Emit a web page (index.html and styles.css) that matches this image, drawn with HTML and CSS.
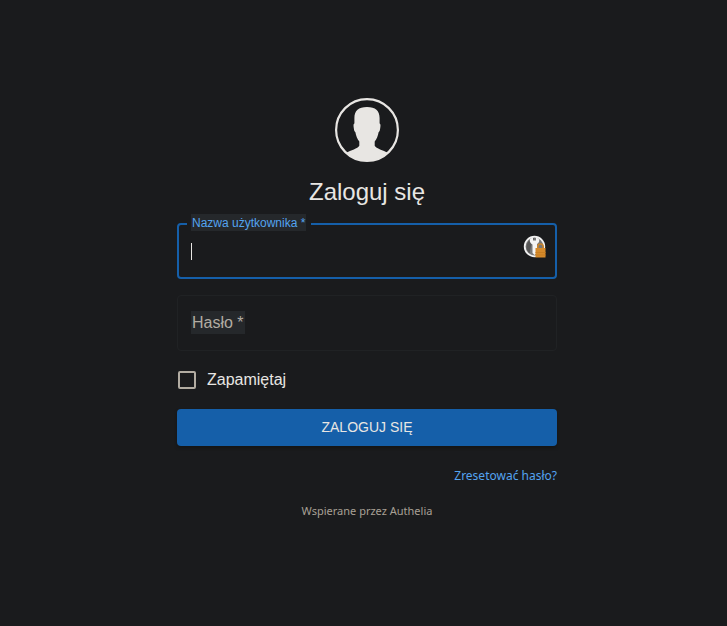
FILE: index.html
```html
<!DOCTYPE html>
<html lang="pl">
<head>
<meta charset="utf-8">
<meta name="viewport" content="width=device-width, initial-scale=1">
<title>Zaloguj się</title>
<link rel="stylesheet" href="styles.css">
</head>
<body>
<main class="login">
  <svg class="avatar" viewBox="0 0 64 64" aria-hidden="true">
    <defs><clipPath id="disc"><circle cx="32" cy="32" r="31"/></clipPath></defs>
    <circle cx="32" cy="32" r="30.9" fill="none" stroke="#e8e6e3" stroke-width="2.2"/>
    <path clip-path="url(#disc)" fill="#e8e6e3" d="M32 9c8.500 0 12.600 3.800 12.600 11v5.400c1 .4 1 2 .7 4.200-.3 2.600-.7 4.200-1.700 4.700-.6 3.600-1.800 6.700-3.900 9.200v4.200c1.500 3 8.500 4.300 13.300 7.300V64H11v-9c4.800-3 11.800-4.300 13.300-7.300v-4.200c-2.100-2.500-3.300-5.600-3.900-9.200-1-.5-1.400-2.100-1.700-4.700-.3-2.200-.3-3.800.7-4.200V20c0-7.200 4.100-11 12.600-11z"/>
  </svg>
  <h1 class="title">Zaloguj się</h1>
  <form class="form">
    <div class="field field-active">
      <label class="label label-raised" for="username">Nazwa użytkownika *</label>
      <input class="input" id="username" type="text" autocomplete="username" required>
      <span class="caret"></span>
      <svg class="key" viewBox="0 0 24 24" aria-hidden="true">
        <circle cx="11.500" cy="11.500" r="9.800" fill="#777" stroke="#f1f1f1" stroke-width="1.800"/>
        <path d="M11 3a9 9 0 0 0-4.500 15.500L8 11z" fill="#555"/>
        <path d="M7.500 3.500l2.500-1v3h3v-3l2.500 1c1.500 2 .5 4.500-1.500 5.500v9L11.500 20l-2-2V9.500C7 8 6 5.500 7.500 3.500z" fill="#f4f4f4"/>
        <path d="M14.800 14v-2.500c0-3.400 5.400-3.400 5.400 0V14" fill="none" stroke="#c9842c" stroke-width="1.600"/>
        <rect x="12.500" y="13" width="10" height="9.500" fill="#d58a2b"/>
        <path d="M12.500 17.500h10M12.500 20h10" stroke="#c97f22" stroke-width="1"/>
      </svg>
    </div>
    <div class="field">
      <label class="label label-resting" for="password">Hasło *</label>
      <input class="input" id="password" type="password" autocomplete="current-password" required>
    </div>
    <label class="remember"><input class="checkbox" type="checkbox">Zapamiętaj</label>
    <button class="submit" type="submit">Zaloguj się</button>
    <a class="reset" href="#reset">Zresetować hasło?</a>
  </form>
  <a class="powered" href="#authelia">Wspierane przez Authelia</a>
</main>
</body>
</html>
```
FILE: styles.css
```css
* {
  box-sizing: border-box;
}

body {
  margin: 0;
  min-height: 100vh;
  background: #1a1b1d;
  color: #e8e6e3;
  font-family: "Liberation Sans", Arial, sans-serif;
  font-size: 16px;
}

.login {
  display: flex;
  flex-direction: column;
  align-items: center;
  padding: 98px 16px 0 23px;
}

.avatar {
  width: 64px;
  height: 64px;
  overflow: visible;
}

.title {
  margin: 14px 0 15px;
  font-size: 24px;
  line-height: 32px;
  font-weight: 400;
}

.form {
  display: flex;
  flex-direction: column;
  gap: 16px;
  width: 100%;
  max-width: 380px;
}

.field {
  position: relative;
  display: flex;
  height: 56px;
  border: 1px solid #202224;
  border-radius: 4px;
}

.field-active {
  border: 2px solid #155fa9;
}

.input {
  flex: 1;
  min-width: 0;
  padding: 0 40px 0 12px;
  border: 0;
  outline: 0;
  background: transparent;
  color: inherit;
  font: inherit;
}

.label {
  position: absolute;
  background: #25282b;
}

.label-raised {
  top: -11px;
  left: 12px;
  padding: 1px 1px 0;
  font-size: 12px;
  line-height: 16px;
  color: #54a4f0;
  box-shadow: -4px 0 #1a1b1d, 5px 0 #1a1b1d;
}

.label-resting {
  top: 15px;
  left: 13px;
  padding: 0 1px;
  line-height: 23px;
  color: #b2aca2;
}

.caret {
  position: absolute;
  top: 18px;
  left: 12px;
  width: 1px;
  height: 17px;
  background: #e8e6e3;
}

.key {
  position: absolute;
  top: 10px;
  right: 8px;
  width: 24px;
  height: 24px;
}

.remember {
  display: flex;
  align-items: center;
  gap: 11px;
  height: 26px;
  padding-left: 1px;
}

.checkbox {
  appearance: none;
  width: 18px;
  height: 18px;
  margin: 0;
  border: 2px solid #b2aca2;
  border-radius: 2px;
}

.submit {
  height: 37px;
  padding: 0 0 2px;
  border: 0;
  border-radius: 4px;
  background: #155fa9;
  color: #e8e6e3;
  font: inherit;
  font-size: 14px;
  text-transform: uppercase;
  box-shadow: 0 2px 3px #141516;
}

.reset {
  align-self: flex-end;
  margin-top: 4px;
  font-family: "Noto Sans", sans-serif;
  font-size: 12px;
  line-height: 20px;
  color: #54a4f0;
  text-decoration: none;
}

.powered {
  margin-top: 16px;
  font-family: "Noto Sans", sans-serif;
  font-size: 11px;
  line-height: 18px;
  color: #a8a095;
  text-decoration: none;
}
```
